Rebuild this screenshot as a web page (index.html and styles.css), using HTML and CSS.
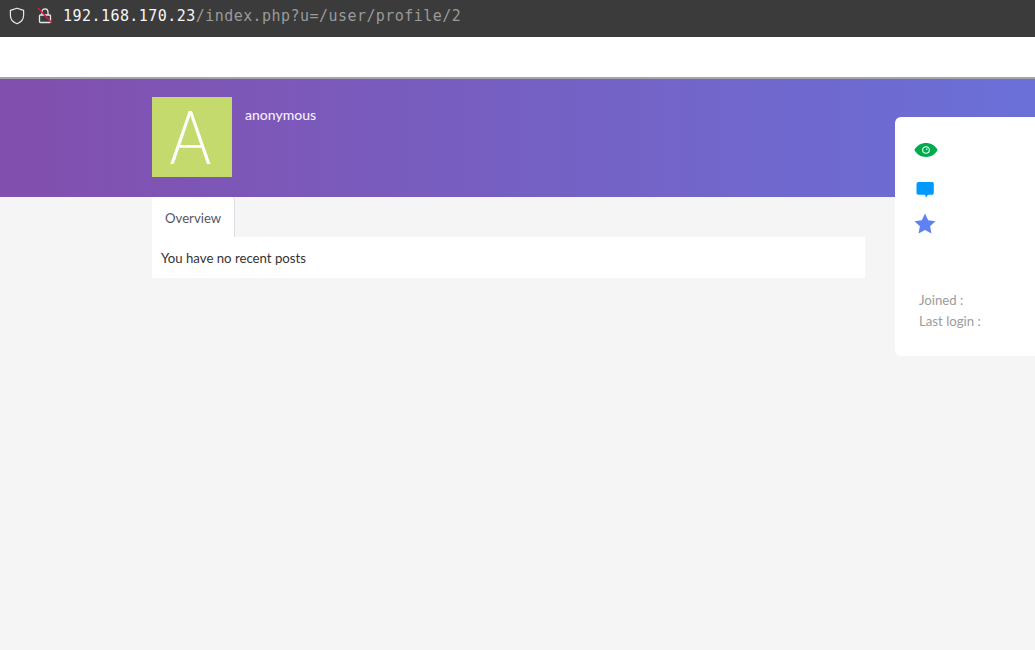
FILE: index.html
```html
<!DOCTYPE html>
<html lang="en">
<head>
<meta charset="utf-8">
<title>Profile</title>
<link rel="stylesheet" href="styles.css">
</head>
<body>
<div class="urlbar">
  <svg class="ic-shield" width="16" height="18" viewBox="0 0 16 18"><path d="M8 1.200 14.600 3.400V8.500C14.600 12.600 11.600 15.400 8 16.800 4.400 15.400 1.400 12.600 1.400 8.500V3.400Z" fill="none" stroke="#e8e8e8" stroke-width="1.200" stroke-linejoin="round"/></svg>
  <svg class="ic-lock" width="16" height="18" viewBox="0 0 16 18"><path d="M5 8V5C5 3 6.300 1.800 8 1.800S11 3 11 5V8" fill="none" stroke="#e8e8e8" stroke-width="1.300"/><rect x="2.500" y="8" width="11" height="7.500" rx="1" fill="none" stroke="#e8e8e8" stroke-width="1.300"/><path d="M1 1 15 16" stroke="#e5173f" stroke-width="1.300"/></svg>
  <span class="url"><span class="host">192.168.170.23</span>/index.php?u=/user/profile/2</span>
</div>
<div class="nav"></div>
<main class="page">
  <header class="banner">
    <div class="avatar"><span class="avatar-letter">A</span></div>
    <div class="username">anonymous</div>
  </header>
  <section class="content">
    <div class="tabs"><div class="tab">Overview</div></div>
    <div class="panel">You have no recent posts</div>
  </section>
  <aside class="side">
    <div class="stats">
      <svg class="ic-eye" width="24" height="14" viewBox="0 0 24 14"><path fill-rule="evenodd" d="M.3 7C3 2.400 7 .1 12 .1S21 2.400 23.700 7C21 11.600 17 13.900 12 13.900S3 11.600 .3 7ZM12 3.200A3.800 3.800 0 1 0 12 10.800 3.800 3.800 0 1 0 12 3.200Z" fill="#00ab4e"/><circle cx="12" cy="7" r="2.800" fill="#00ab4e"/><circle cx="12.800" cy="6.200" r=".8" fill="#fff"/></svg>
      <svg class="ic-chat" width="18" height="16" viewBox="0 0 18 16"><path d="M2.500 0H15.500A2 2 0 0 1 17.800 2V10.500A2 2 0 0 1 15.500 12.800H12L10 15.500 9 12.800H2.500A2 2 0 0 1 .5 10.500V2A2 2 0 0 1 2.500 0Z" fill="#0099ff"/></svg>
      <svg class="ic-star" width="22" height="21" viewBox="0 0 22 21"><path d="M11 .5 14.200 7.300 21.500 8.200 16.100 13.200 17.500 20.500 11 16.900 4.500 20.500 5.900 13.200.5 8.200 7.800 7.300Z" fill="#5f82f2"/></svg>
    </div>
    <div class="meta">
      <div>Joined :</div>
      <div>Last login :</div>
    </div>
  </aside>
</main>
</body>
</html>
```
FILE: styles.css
```css
* { box-sizing: border-box; }
html, body { margin: 0; padding: 0; }
body {
  background: #f5f5f5;
  font-family: "Lato", "Noto Sans", sans-serif;
  height: 650px;
  overflow: hidden;
}
.urlbar {
  height: 37px;
  background: #3b3b3b;
  display: flex;
  align-items: center;
  padding: 0 0 6px 9px;
}
.ic-shield { flex: none; margin-top: 1px; }
.ic-lock { flex: none; margin: 1px 0 0 12px; }
.url {
  margin-left: 10px;
  font-family: "DejaVu Sans Mono", "Liberation Mono", monospace;
  font-size: 15px;
  letter-spacing: 0.45px;
  color: #9a9a9a;
  white-space: nowrap;
}
.host { color: #f6f6f6; }
.nav {
  height: 42px;
  background: #fff;
  border-bottom: 2px solid #a7a3ad;
}
.page { position: relative; }
.banner {
  height: 118px;
  padding: 18px 0 0 152px;
  display: flex;
  align-items: flex-start;
  background: linear-gradient(90deg, #824fad 0%, #6a70d8 100%);
}
.avatar {
  width: 80px;
  height: 80px;
  background: #c5da6c;
  color: #fff;
  font-family: "Lato", sans-serif;
  font-weight: 300;
  font-size: 74px;
  line-height: 78px;
  text-align: center;
}
.avatar-letter {
  display: inline-block;
  margin-right: 3px;
  transform: scaleX(0.86);
}
.username {
  margin: 9px 0 0 13px;
  color: #f3eefa;
  font-size: 14px;
  font-weight: 500;
  line-height: 18px;
}
.content {
  margin-left: 152px;
  width: 713px;
}
.tabs { display: flex; height: 40px; }
.tab {
  width: 83px;
  background: #fff;
  border-right: 1px solid #dcdce4;
  border-top-right-radius: 3px;
  border-top-left-radius: 3px;
  padding-top: 12px;
  padding-left: 13px;
  font-size: 13.2px;
  line-height: 18px;
  color: #55585f;
}
.panel {
  background: #fff;
  height: 41px;
  padding: 12px 0 0 9px;
  font-size: 13.2px;
  line-height: 18px;
  color: #333;
}
.side {
  position: absolute;
  top: 38px;
  left: 895px;
  width: 140px;
  height: 239px;
  background: #fff;
  border-radius: 6px 0 0 6px;
  padding: 24px 0 0 19px;
}
.stats { display: flex; flex-direction: column; align-items: flex-start; }
.ic-eye { margin: 2px 0 0 0; }
.ic-chat { margin: 25px 0 0 2px; }
.ic-star { margin: 15px 0 0 0; }
.meta {
  margin: 56px 0 0 5px;
  font-size: 13.2px;
  line-height: 21px;
  color: #9c9c9c;
}
```
